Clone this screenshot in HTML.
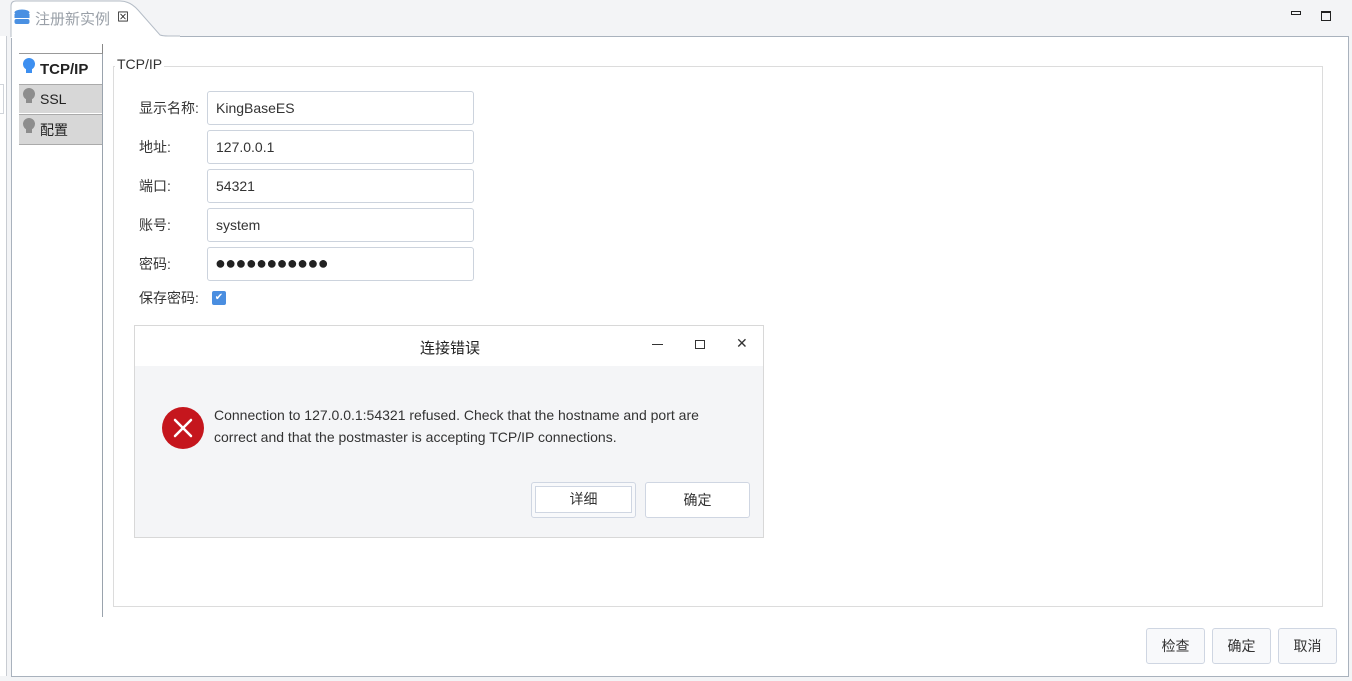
<!DOCTYPE html>
<html><head><meta charset="utf-8"><style>
*{box-sizing:border-box;margin:0;padding:0}
body{width:1352px;height:681px;background:#f3f4f6;position:relative;overflow:hidden;font-family:"Liberation Sans","Noto Sans CJK SC",sans-serif;font-size:14px;color:#333}
.abs{position:absolute}
.inp{position:absolute;left:207px;width:267px;height:34px;border:1px solid #ccd3dd;border-radius:3px;background:#fff;padding:8px 8px;font-size:14px;color:#333}
.lbl{position:absolute;left:139px;font-size:14px;color:#333}
.btn{position:absolute;border:1px solid #cfd6e2;border-radius:3px;background:#f8f9fb;text-align:center;font-size:14px;color:#333}
.bulb{position:absolute;width:12px;height:12px;border-radius:50%}
</style></head><body>
<div class="abs" style="left:0;top:36px;width:7px;height:640px;background:#fff;border-right:1px solid #c8ccd2"></div>
<div class="abs" style="left:-2px;top:84px;width:6px;height:30px;border:1px solid #d0d4da;background:#fff"></div>
<div class="abs" style="left:11px;top:36px;width:1338px;height:641px;background:#fff;border:1px solid #a9b2bd"></div>
<svg class="abs" style="left:0;top:0" width="180" height="40"><path d="M11 38 V6 Q11 1 16 1 H120 Q130 1 138 10 L160 35 Q163 36 168 36 H180 V38 Z" fill="#fff"/><path d="M11 37 V6 Q11 1 16 1 H120 Q130 1 138 10 L160 35 Q163 36 168 36 H180" fill="none" stroke="#b4bcc6" stroke-width="1"/></svg>
<svg class="abs" style="left:14px;top:9px" width="18" height="16"><ellipse cx="8" cy="3.5" rx="7.5" ry="3" fill="#4a90e2"/><rect x="0.5" y="5" width="15" height="4" fill="#4a90e2"/><rect x="0.5" y="10" width="15" height="5" rx="2" fill="#4a90e2"/></svg>
<div class="abs" style="left:35px;top:8px;font-size:15px;color:#9aa0a8">注册新实例</div>
<div class="abs" style="left:117px;top:8px;font-size:12px;color:#222">⊠</div>
<div class="abs" style="left:1291px;top:11px;width:10px;height:4px;border:1px solid #222"></div>
<div class="abs" style="left:1321px;top:11px;width:10px;height:10px;border:1px solid #222;border-top-width:2px"></div>
<div class="abs" style="left:19px;top:44px;width:84px;height:10px;border-right:1px solid #888;border-bottom:1px solid #999"></div>
<div class="abs" style="left:102px;top:54px;width:1px;height:563px;background:#9aa3ad"></div>
<div class="bulb" style="left:23px;top:58px;background:#3d8ff0"></div>
<div class="abs" style="left:26px;top:69px;width:6px;height:4px;background:#3d8ff0"></div>
<div class="abs" style="left:40px;top:61px;font-weight:bold;font-size:15px;color:#222">TCP/IP</div>
<div class="abs" style="left:19px;top:84px;width:83px;height:29px;background:#d7d7d7;border-top:1px solid #aaa"></div>
<div class="bulb" style="left:23px;top:88px;background:#8d8d8d"></div>
<div class="abs" style="left:26px;top:99px;width:6px;height:4px;background:#8d8d8d"></div>
<div class="abs" style="left:40px;top:91px;font-size:14px;color:#222">SSL</div>
<div class="abs" style="left:19px;top:114px;width:83px;height:31px;background:#d7d7d7;border-top:1px solid #aaa;border-bottom:1px solid #aaa"></div>
<div class="bulb" style="left:23px;top:118px;background:#8d8d8d"></div>
<div class="abs" style="left:26px;top:129px;width:6px;height:4px;background:#8d8d8d"></div>
<div class="abs" style="left:40px;top:120px;font-size:14px;color:#222">配置</div>
<div class="abs" style="left:113px;top:66px;width:1210px;height:541px;border:1px solid #dcdcdc"></div>
<div class="abs" style="left:115px;top:56px;padding:0 2px;background:#fff;font-size:14px;color:#333">TCP/IP</div>
<div class="lbl" style="top:98px">显示名称:</div><div class="inp" style="top:91px">KingBaseES</div>
<div class="lbl" style="top:137px">地址:</div><div class="inp" style="top:130px">127.0.0.1</div>
<div class="lbl" style="top:176px">端口:</div><div class="inp" style="top:169px">54321</div>
<div class="lbl" style="top:215px">账号:</div><div class="inp" style="top:208px">system</div>
<div class="lbl" style="top:254px">密码:</div><div class="inp" style="top:247px;font-size:18px;padding:5px 0 0 7px;letter-spacing:-0.6px;color:#222">●●●●●●●●●●●</div>
<div class="lbl" style="top:288px">保存密码:</div>
<div class="abs" style="left:212px;top:291px;width:14px;height:14px;background:#4a8ee0;border-radius:2px;color:#fff;font-size:10px;text-align:center;line-height:14px">✔</div>
<div class="abs" style="left:134px;top:325px;width:630px;height:213px;background:#f4f5f7;border:1px solid #d8d8d8"></div>
<div class="abs" style="left:135px;top:326px;width:628px;height:40px;background:#fff"></div>
<div class="abs" style="left:420px;top:337px;font-size:15px;color:#222">连接错误</div>
<div class="abs" style="left:652px;top:344px;width:11px;height:1px;background:#333"></div>
<div class="abs" style="left:695px;top:340px;width:10px;height:9px;border:1px solid #333"></div>
<div class="abs" style="left:736px;top:335px;font-size:14px;color:#333">✕</div>
<svg class="abs" style="left:161px;top:406px" width="44" height="44"><circle cx="22" cy="22" r="21" fill="#c5161d"/><path d="M14 14 L30 30 M30 14 L14 30" stroke="#fff" stroke-width="2.5" stroke-linecap="round"/></svg>
<div class="abs" style="left:214px;top:404px;font-size:14px;line-height:22px;color:#333;width:530px">Connection to 127.0.0.1:54321 refused. Check that the hostname and port are correct and that the postmaster is accepting TCP/IP connections.</div>
<div class="btn" style="left:531px;top:482px;width:105px;height:36px;padding-top:3px"><div style="border:1px solid #cfd6e2;margin:0 3px;height:27px;line-height:25px;background:#fff">详细</div></div>
<div class="btn" style="left:645px;top:482px;width:105px;height:36px;line-height:34px;background:#fff">确定</div>
<div class="btn" style="left:1146px;top:628px;width:59px;height:36px;line-height:34px">检查</div>
<div class="btn" style="left:1212px;top:628px;width:59px;height:36px;line-height:34px">确定</div>
<div class="btn" style="left:1278px;top:628px;width:59px;height:36px;line-height:34px">取消</div>
</body></html>
